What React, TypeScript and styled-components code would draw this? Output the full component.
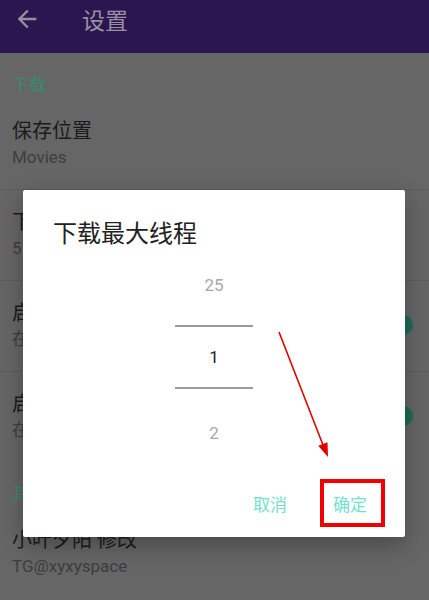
import React from 'react';
import styled, { createGlobalStyle } from 'styled-components';

const GlobalStyle = createGlobalStyle`
  html, body {
    margin: 0;
    padding: 0;
    background: #666666;
  }
  body {
    font-family: Roboto, "Noto Sans CJK SC", sans-serif;
  }
  * {
    box-sizing: border-box;
  }
`;

const Page = styled.div`
  position: relative;
  width: 429px;
  height: 600px;
  overflow: hidden;
  background: #666666;
`;

const Toolbar = styled.header`
  height: 53px;
  background: #2c1650;
  display: flex;
  align-items: flex-start;
  padding-left: 13px;
`;

const ToolbarRow = styled.div`
  height: 38px;
  display: flex;
  align-items: center;
`;

const BackButton = styled.div`
  width: 28px;
  height: 28px;
  display: flex;
  color: #988fa2;
`;

const ToolbarTitle = styled.h1`
  margin: 0 0 0 41px;
  font-size: 23px;
  font-weight: 400;
  color: #988fa2;
  font-family: "Noto Sans CJK SC", sans-serif;
`;

const SectionHeader = styled.div`
  padding: 22px 12px 6px;
  font-size: 17px;
  line-height: 18px;
  color: #3a8a70;
  font-family: "Noto Sans CJK SC", sans-serif;
`;

const Row = styled.div<{ $divider?: boolean }>`
  display: flex;
  align-items: center;
  padding: 18px 18px 20px 12px;
  border-bottom: ${(p) => (p.$divider ? '1px solid #5c5c5c' : 'none')};
`;

const RowText = styled.div`
  flex: 1;
  display: flex;
  flex-direction: column;
  white-space: nowrap;
  overflow: hidden;
`;

const RowTitle = styled.div`
  font-size: 20px;
  line-height: 28px;
  color: #1b1b1b;
  font-family: Roboto, "Noto Sans CJK SC", sans-serif;
`;

const RowSubtitle = styled.div`
  font-size: 17px;
  line-height: 24px;
  color: #3e3e3e;
  font-family: Roboto, "Noto Sans CJK SC", sans-serif;
`;

const Switch = styled.div`
  position: relative;
  width: 36px;
  height: 14px;
  border-radius: 7px;
  background: #4a7a6c;
  flex-shrink: 0;

  &::after {
    content: '';
    position: absolute;
    right: -2px;
    top: -3px;
    width: 20px;
    height: 20px;
    border-radius: 50%;
    background: #1d6b55;
  }
`;

const Dialog = styled.div`
  position: absolute;
  left: 23px;
  top: 190px;
  width: 382px;
  height: 347px;
  background: #ffffff;
  border-radius: 2px;
  box-shadow: 0 8px 24px rgba(0, 0, 0, 0.3);
  display: flex;
  flex-direction: column;
  padding: 26px 24px 10px 30px;
`;

const DialogTitle = styled.div`
  font-size: 24px;
  line-height: 32px;
  color: #212121;
  font-family: "Noto Sans CJK SC", sans-serif;
`;

const Picker = styled.div`
  margin-top: 17px;
  align-self: center;
  margin-left: -6px;
  width: 78px;
  display: flex;
  flex-direction: column;
  align-items: stretch;
`;

const PickerValue = styled.div<{ $selected?: boolean; $h: number; $top?: number }>`
  height: ${(p) => p.$h}px;
  margin-top: ${(p) => p.$top ?? 0}px;
  display: flex;
  align-items: center;
  justify-content: center;
  font-size: 17px;
  color: ${(p) => (p.$selected ? '#222222' : '#a8a8a8')};
`;

const PickerLine = styled.div<{ $top?: number }>`
  height: 2px;
  margin-top: ${(p) => p.$top ?? 0}px;
  background: #9a9a9a;
`;

const Actions = styled.div`
  margin-top: auto;
  display: flex;
  justify-content: flex-end;
  gap: 18px;
`;

const ActionButton = styled.div`
  height: 48px;
  padding: 0 14px;
  display: flex;
  align-items: center;
  font-size: 17px;
  color: #74e0cd;
  font-family: "Noto Sans CJK SC", sans-serif;
`;

const Highlight = styled.div`
  position: absolute;
  left: 297px;
  top: 289px;
  width: 65px;
  height: 48px;
  border: 4px solid #f00000;
  pointer-events: none;
`;

const Annotation = styled.svg`
  position: absolute;
  left: 0;
  top: 0;
  pointer-events: none;
`;

const ArrowBack = () => (
  <svg width="28" height="28" viewBox="0 0 24 24" fill="currentColor">
    <path d="M20 11H7.83l5.59-5.59L12 4l-8 8 8 8 1.41-1.41L7.83 13H20v-2z" />
  </svg>
);

export default function App() {
  return (
    <Page>
      <GlobalStyle />
      <Toolbar>
        <ToolbarRow>
          <BackButton>
            <ArrowBack />
          </BackButton>
          <ToolbarTitle>设置</ToolbarTitle>
        </ToolbarRow>
      </Toolbar>

      <SectionHeader>下载</SectionHeader>
      <Row $divider>
        <RowText>
          <RowTitle>保存位置</RowTitle>
          <RowSubtitle>Movies</RowSubtitle>
        </RowText>
      </Row>
      <Row $divider>
        <RowText>
          <RowTitle>下载最大线程</RowTitle>
          <RowSubtitle>5</RowSubtitle>
        </RowText>
      </Row>
      <Row $divider>
        <RowText>
          <RowTitle>启用下载通知</RowTitle>
          <RowSubtitle>在通知栏显示下载进度</RowSubtitle>
        </RowText>
        <Switch />
      </Row>
      <Row>
        <RowText>
          <RowTitle>启用自动下载</RowTitle>
          <RowSubtitle>在WiFi环境下自动下载</RowSubtitle>
        </RowText>
        <Switch />
      </Row>

      <SectionHeader>其他</SectionHeader>
      <Row>
        <RowText>
          <RowTitle>小叶夕阳 修改</RowTitle>
          <RowSubtitle>TG@xyxyspace</RowSubtitle>
        </RowText>
      </Row>

      <Dialog>
        <DialogTitle>下载最大线程</DialogTitle>
        <Picker>
          <PickerValue $h={40}>25</PickerValue>
          <PickerLine $top={20} />
          <PickerValue $h={60} $selected>
            1
          </PickerValue>
          <PickerLine />
          <PickerValue $h={40} $top={24}>
            2
          </PickerValue>
        </Picker>
        <Actions>
          <ActionButton>取消</ActionButton>
          <ActionButton>确定</ActionButton>
        </Actions>
        <Highlight />
      </Dialog>

      <Annotation width="429" height="600" viewBox="0 0 429 600">
        <line x1="279" y1="332" x2="323" y2="445" stroke="#e00000" strokeWidth="1.6" />
        <polygon points="328,457 318.2,445.8 327.5,442.2" fill="#e00000" />
      </Annotation>
    </Page>
  );
}
